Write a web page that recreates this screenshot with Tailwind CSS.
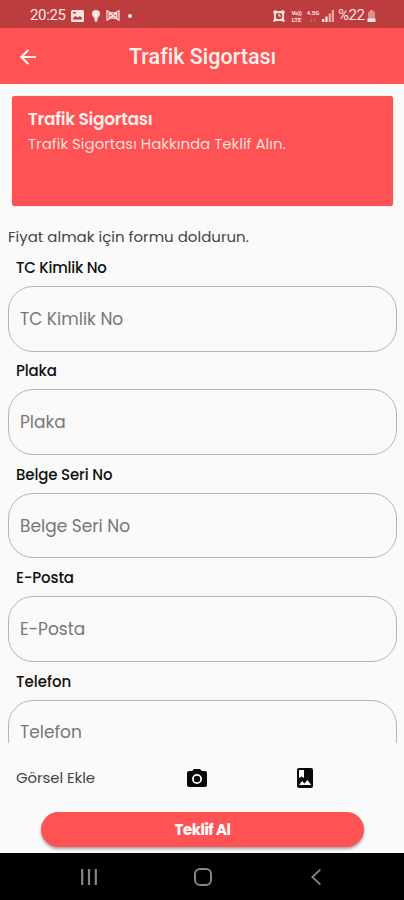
<!DOCTYPE html>
<html lang="tr">
<head>
<meta charset="utf-8">
<title>Trafik Sigortası</title>
<script src="https://cdn.jsdelivr.net/npm/@tailwindcss/browser@4"></script>
</head>
<body class="w-[404px] h-[900px] overflow-hidden bg-[#fafafa] font-['Poppins','Inter',sans-serif] flex flex-col whitespace-nowrap">
  <header class="shrink-0 font-['Roboto',sans-serif] text-white">
    <div class="h-[28px] bg-[#bd3c3d] flex items-center pl-[30px] pr-[28px] pt-[3px] text-[#ffe5e1]">
      <span class="text-[15px] leading-none tracking-[-0.35px] w-[41px]">20:25</span>
      <svg class="w-[13px] h-[12px]" viewBox="0 0 13 12"><rect width="13" height="12" rx="1.5" fill="currentColor"/><path d="M2 9.5V8l2.500-2L7 7.500l2-1.500 2 2v1.500z M2 2h3v1.500H2z" fill="#bd3c3d"/></svg>
      <svg class="w-[8px] h-[12px] ml-[8px]" viewBox="0 0 8 12"><path d="M4 0a4 4 0 0 0-4 4c0 2 2 3 2.500 4.500V11L4 12l1.500-1V8.500C6 7 8 6 8 4a4 4 0 0 0-4-4z" fill="currentColor"/></svg>
      <svg class="w-[14px] h-[11px] ml-[6px]" viewBox="0 0 14 11" fill="none" stroke="currentColor" stroke-width="1.200"><path d="M1 .8v9.400l3.500-2h5l3.500 2V.8l-3.500 2h-5zM3.200 3v5L7 5.500 3.200 3M10.800 3v5L7 5.500 10.800 3"/></svg>
      <span class="size-[4px] rounded-full bg-current ml-[8px]"></span>
      <svg class="w-[12px] h-[12px] ml-auto" viewBox="0 0 12 12"><path d="M0 2l2-2 2 1h4l2-1 2 2-1 2v5l1 2-1.500 1-1.500-1H3l-1.500 1L0 11l1-2V4z" fill="currentColor"/><circle cx="6" cy="6" r="3.300" fill="#bd3c3d"/><path d="M6 3.500V6h2" fill="none" stroke="currentColor" stroke-width="1.200"/></svg>
      <span class="ml-[5px] w-[13px] text-[6px] leading-[7px] font-bold text-center"><span class="block tracking-[-0.4px]">Vo))</span><span class="block">LTE</span></span>
      <span class="ml-[3px] w-[14px] text-[6px] leading-[7px] font-bold text-center"><span class="block">4.5G</span><span class="block opacity-60">↓↑</span></span>
      <svg class="w-[12px] h-[12px] ml-[2px]" viewBox="0 0 12 12" fill="currentColor"><path d="M0 9h2.300v3H0zM3.300 6.500h2.300V12H3.300z"/><path d="M6.600 3.500h2.300V12H6.600zM9.700 0H12v12H9.700z" opacity=".65"/></svg>
      <span class="ml-[4px] text-[15px] leading-none tracking-[-0.4px] w-[28px]">%22</span>
      <svg class="w-[9px] h-[12px] ml-[1px]" viewBox="0 0 9 12" fill="currentColor"><path d="M3 0h3v1.500h1.500L8 3v6H1V3l.5-1.500H3z" opacity=".5"/><path d="M.5 8.500h8V12h-8z"/></svg>
    </div>
    <div class="h-[56px] bg-[#ff5254] flex items-center pt-[1px]">
      <svg class="w-[16px] h-[16px] ml-[20px]" viewBox="0 0 16 16" fill="none" stroke="#fff1ec" stroke-width="2.200"><path d="M16 8H1.500M8.300 1L1.400 8l6.900 7"/></svg>
      <h1 class="ml-[93px] text-[21.500px] font-medium leading-none text-[#fff1ec]">Trafik Sigortası</h1>
    </div>
  </header>

  <main class="h-[659px] shrink-0 overflow-hidden px-[8px] pt-[12px]">
    <section class="mx-[4px] w-[381px] h-[110px] rounded-[3px] bg-[#ff5254] pl-[16px] pt-[11px] text-[#fff0ec] shadow-[0_0_1px_#ff5254]">
      <h2 class="text-[17px] leading-[25px] font-semibold tracking-[-0.320px]">Trafik Sigortası</h2>
      <p class="text-[15px] leading-[24px] text-[#ffdedb] tracking-[-0.020px]">Trafik Sigortası Hakkında Teklif Alın.</p>
    </section>
    <p class="mt-[20px] h-[22px] text-[15px] leading-[22px] text-[#444]">Fiyat almak için formu doldurun.</p>
    <form>
      <div class="h-[103.400px]"><label class="block ml-[8px] h-[38px] pt-[8px] text-[15px] leading-[23px] font-medium text-[#111] tracking-[-0.250px]">TC Kimlik No</label><div class="h-[65.500px] w-[389px] rounded-[25px] border border-[#b5b5b5] pl-[11px] pt-[2px] flex items-center text-[17px] text-[#777]">TC Kimlik No</div></div>
      <div class="h-[103.400px]"><label class="block ml-[8px] h-[38px] pt-[8px] text-[15px] leading-[23px] font-medium text-[#111] tracking-[-0.150px]">Plaka</label><div class="h-[65.500px] w-[389px] rounded-[25px] border border-[#b5b5b5] pl-[11px] pt-[2px] flex items-center text-[17px] text-[#777]">Plaka</div></div>
      <div class="h-[103.400px]"><label class="block ml-[8px] h-[38px] pt-[8px] text-[15px] leading-[23px] font-medium text-[#111] tracking-[-0.150px]">Belge Seri No</label><div class="h-[65.500px] w-[389px] rounded-[25px] border border-[#b5b5b5] pl-[11px] pt-[2px] flex items-center text-[17px] text-[#777]">Belge Seri No</div></div>
      <div class="h-[103.400px]"><label class="block ml-[8px] h-[38px] pt-[8px] text-[15px] leading-[23px] font-medium text-[#111] tracking-[-0.150px]">E-Posta</label><div class="h-[65.500px] w-[389px] rounded-[25px] border border-[#b5b5b5] pl-[11px] pt-[2px] flex items-center text-[17px] text-[#777]">E-Posta</div></div>
      <div class="h-[103.400px]"><label class="block ml-[8px] h-[38px] pt-[8px] text-[15px] leading-[23px] font-medium text-[#111]">Telefon</label><div class="h-[65.500px] w-[389px] rounded-[25px] border border-[#b5b5b5] pl-[11px] flex items-center text-[17px] text-[#777]">Telefon</div></div>
    </form>
  </main>

  <div class="h-[69px] shrink-0 flex items-center pl-[16px]">
    <span class="w-[171px] pt-[2px] text-[15px] text-[#444] tracking-[-0.100px]">Görsel Ekle</span>
    <svg class="w-[20px] h-[18px]" viewBox="0 0 20 18"><path fill="#080808" fill-rule="evenodd" d="M7 0h6l1.800 2H18a2 2 0 0 1 2 2v12a2 2 0 0 1-2 2H2a2 2 0 0 1-2-2V4a2 2 0 0 1 2-2h3.200zM10 5a5 5 0 1 0 0 10 5 5 0 0 0 0-10zm0 1.800a3.200 3.200 0 1 1 0 6.400 3.200 3.200 0 0 1 0-6.400z"/></svg>
    <svg class="w-[16px] h-[20px] ml-[90px]" viewBox="0 0 16 20"><rect width="16" height="20" rx="2" fill="#080808"/><path fill="#fafafa" d="M2 2h5v8L4.500 8.500 2 10zM2 17l3.200-4 2.200 2.600L10.500 12l3.700 5z"/></svg>
  </div>
  <div class="h-[41px] shrink-0 pl-[41px]">
    <button class="block w-[323px] h-[35px] rounded-full bg-[#ff5254] text-white text-[15px] pt-[2px] font-bold tracking-[-0.500px] shadow-[0_2px_3px_rgba(0,0,0,0.35)]">Teklif Al</button>
  </div>
  <nav class="h-[47px] shrink-0 bg-black text-[#858585] flex items-center">
    <svg class="w-[16px] h-[16px] ml-[81px]" viewBox="0 0 16 16" stroke="currentColor" stroke-width="2.200"><path d="M1.200 0v16M8 0v16M14.800 0v16"/></svg>
    <svg class="w-[18px] h-[18px] ml-[97px]" viewBox="0 0 18 18" fill="none" stroke="currentColor" stroke-width="2"><rect x="1" y="1" width="16" height="16" rx="5"/></svg>
    <svg class="w-[10px] h-[16px] ml-[99px]" viewBox="0 0 10 16" fill="none" stroke="currentColor" stroke-width="1.800"><path d="M9.300.5L1.300 8l8 7.500"/></svg>
  </nav>
</body>
</html>
